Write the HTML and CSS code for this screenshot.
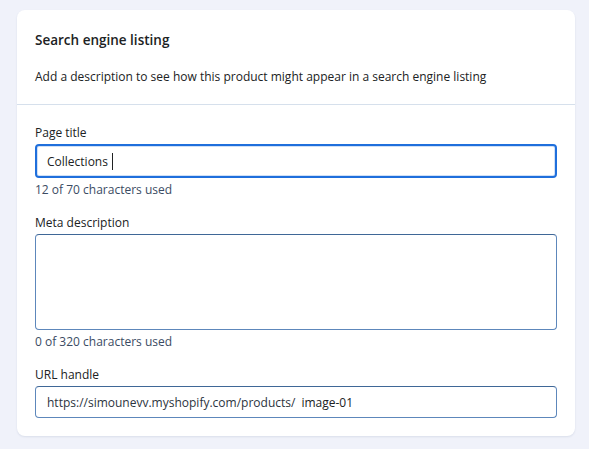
FILE: index.html
```html
<!DOCTYPE html>
<html lang="en">
<head>
<meta charset="utf-8">
<title>Search engine listing</title>
<link rel="stylesheet" href="styles.css">
</head>
<body>
<section class="card">
  <header class="card-header">
    <h2 class="card-title">Search engine listing</h2>
    <p class="card-desc">Add a description to see how this product might appear in a search engine listing</p>
  </header>
  <div class="card-body">
    <div class="field">
      <label class="label" for="page-title">Page title</label>
      <div class="input input-focused">
        <span class="value">Collections</span><span class="caret"></span>
      </div>
      <p class="help">12 of 70 characters used</p>
    </div>
    <div class="field">
      <label class="label" for="meta-desc">Meta description</label>
      <div class="input textarea" id="meta-desc"></div>
      <p class="help">0 of 320 characters used</p>
    </div>
    <div class="field">
      <label class="label">URL handle</label>
      <div class="input">
        <span class="prefix">https://simounevv.myshopify.com/products/</span><span class="value">image-01</span>
      </div>
    </div>
  </div>
</section>
</body>
</html>
```

FILE: styles.css
```css
* { box-sizing: border-box; }

body {
  margin: 0;
  padding: 10px 14px 12px 17px;
  background: #f0f2fa;
  font-family: "Segoe UI", "Open Sans", "Noto Sans", sans-serif;
  font-size: 12px;
  color: #202223;
}

.card {
  width: 558px;
  background: #fff;
  border-radius: 8px;
  box-shadow: 0 1px 2px rgba(60, 80, 120, 0.12);
}

.card-header {
  padding: 20px 18px 17px;
  border-bottom: 1px solid #d6e0ec;
}

.card-title {
  margin: 0;
  font-size: 13.5px;
  font-weight: 600;
  line-height: 20px;
}

.card-desc {
  margin: 17px 0 0;
  line-height: 20px;
}

.card-body {
  padding: 18px 18px 18px;
  display: flex;
  flex-direction: column;
  gap: 14px;
}

.label {
  display: block;
  line-height: 20px;
  margin-bottom: 1px;
}

.input {
  height: 32px;
  border: 1px solid #5d87bb;
  border-top-color: #3f6797;
  border-radius: 4px;
  display: flex;
  align-items: center;
  padding: 0 11px;
  white-space: nowrap;
}

.input-focused {
  height: 34px;
  border: 2px solid #1f6fdc;
  box-shadow: inset 0 0 0 1px #cfe0f7;
  padding: 0 10px;
}

.textarea {
  height: 96px;
}

.caret {
  width: 1px;
  height: 17px;
  background: #202223;
  margin-left: 4px;
}

.prefix {
  color: #2c3440;
  margin-right: 6px;
}

.help {
  margin: 3px 0 0;
  line-height: 18px;
  color: #3b4b63;
}
```
